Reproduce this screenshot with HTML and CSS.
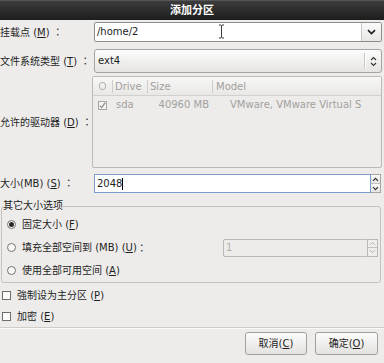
FILE: index.html
```html
<!DOCTYPE html>
<html>
<head>
<meta charset="utf-8">
<title>添加分区</title>
<link rel="stylesheet" href="styles.css">
</head>
<body>
	<div class="titlebar">添加分区</div>

	<div class="row r-mount">
		<label class="lbl">挂载点 (<u>M</u>) <span class="colon">：</span></label>
		<div class="combo_entry">
			<span class="entry_text">/home/2</span>
			<svg class="ibeam" width="7" height="15" viewBox="0 0 7 15"><path d="M1 1h2l0.5 0.6 0.5-0.6h2M3.5 1.5v12M1 14h2l0.5-0.6 0.5 0.6h2" fill="none" stroke="#3a3a3a" stroke-width="1"/></svg>
			<span class="drop_btn">
				<svg width="9" height="6" viewBox="0 0 9 6"><path d="M1 1.2l3.5 3.3 3.5-3.3" fill="none" stroke="#222" stroke-width="1.7"/></svg>
			</span>
		</div>
	</div>

	<div class="row r-fs">
		<label class="lbl">文件系统类型 (<u>T</u>) <span class="colon">：</span></label>
		<div class="combo">
			<span class="combo_text">ext4</span>
			<span class="combo_sep"></span>
			<svg class="updown" width="7" height="11" viewBox="0 0 7 11"><path d="M1 4l2.5-2.5 2.5 2.5M1 7l2.5 2.5 2.5-2.5" fill="none" stroke="#333" stroke-width="1.1"/></svg>
		</div>
	</div>

	<div class="row r-drives">
		<label class="lbl">允许的驱动器 (<u>D</u>) <span class="colon">：</span></label>
		<div class="drive_list">
			<div class="tv_head">
				<span class="c1"><span class="hbox"></span></span>
				<span class="c2">Drive</span>
				<span class="c3">Size</span>
				<span class="c4">Model</span>
			</div>
			<div class="tv_row">
				<span class="c1"><span class="cbox">
					<svg width="7" height="7" viewBox="0 0 7 7"><path d="M0.8 3.6l1.9 2 3.5-5" fill="none" stroke="#8d8b88" stroke-width="1.3"/></svg>
				</span></span>
				<span class="c2">sda</span>
				<span class="c3">40960 MB</span>
				<span class="c4">VMware, VMware Virtual S</span>
			</div>
		</div>
	</div>

	<div class="row r-size">
		<label class="lbl">大小(MB) (<u>S</u>) <span class="colon">：</span></label>
		<div class="spin">
			<span class="spin_entry focus">2048<span class="caret"></span></span>
			<span class="spin_btns">
				<span class="sb"><svg width="7" height="5" viewBox="0 0 7 5"><path d="M1 3.8l2.5-2.5 2.5 2.5" fill="none" stroke="#333" stroke-width="1.2"/></svg></span>
				<span class="sb"><svg width="7" height="5" viewBox="0 0 7 5"><path d="M1 1.2l2.5 2.5 2.5-2.5" fill="none" stroke="#333" stroke-width="1.2"/></svg></span>
			</span>
		</div>
	</div>

	<fieldset class="frame">
		<legend>其它大小选项</legend>
		<div class="opt"><span class="radio on"></span>固定大小 (<u>F</u>)</div>
		<div class="opt">
			<span class="radio"></span>填充全部空间到 (MB) (<u>U</u>) <span class="colon">：</span>
			<div class="spin spin_off">
				<span class="spin_entry">1</span>
				<span class="spin_btns">
					<span class="sb"><svg width="7" height="5" viewBox="0 0 7 5"><path d="M1 3.8l2.5-2.5 2.5 2.5" fill="none" stroke="#b2b0ad" stroke-width="1"/></svg></span>
					<span class="sb"><svg width="7" height="5" viewBox="0 0 7 5"><path d="M1 1.2l2.5 2.5 2.5-2.5" fill="none" stroke="#b2b0ad" stroke-width="1"/></svg></span>
				</span>
			</div>
		</div>
		<div class="opt"><span class="radio"></span>使用全部可用空间 (<u>A</u>)</div>
	</fieldset>

	<div class="checks">
		<div class="chk"><span class="box"></span>強制设为主分区 (<u>P</u>)</div>
		<div class="chk"><span class="box"></span>加密 (<u>E</u>)</div>
	</div>

	<div class="sep"></div>

	<div class="buttons">
		<button class="btn b_cancel">取消(<u>C</u>)</button>
		<button class="btn b_ok">确定(<u>O</u>)</button>
	</div>
</body>
</html>
```

FILE: styles.css
```css
*{ box-sizing: border-box; }

body{
	margin: 0;
	width: 384px;
	height: 363px;
	overflow: hidden;
	background: #edeceb;
	color: #1e1e1e;
	font: 10px/12px "DejaVu Sans", "Noto Sans CJK SC", sans-serif;
}

u{ text-decoration: underline; text-underline-offset: 1px; }
.colon{ font-family: "Noto Sans CJK TC", sans-serif; }

.titlebar{
	height: 20px;
	line-height: 20px;
	text-align: center;
	color: #fff;
	font-size: 11px;
	font-weight: bold;
	background: linear-gradient(#3c3c3c, #1d1d1d);
	border-top: 1px solid #555;
}

/* form rows: label column + field column */
.row{ display: grid; grid-template-columns: 94px 288px; align-items: center; }
.r-mount{ margin-top: 2px; height: 20px; }
.r-fs{ margin-top: 7px; height: 24px; }
.r-drives{ margin-top: 3px; height: 92px; }
.r-size{ margin-top: 6px; height: 19px; }
.lbl{ white-space: nowrap; }

.combo_entry{
	position: relative;
	height: 20px;
	display: flex;
	background: #fff;
	border: 1px solid #8f8c88;
	border-radius: 2px;
}
.entry_text{ flex: 1; padding-left: 2px; line-height: 18px; }
.ibeam{ position: absolute; left: 123px; top: 1px; }
.drop_btn{
	width: 20px;
	display: flex; align-items: center; justify-content: center;
	border-left: 1px solid #c9c7c4;
	background: linear-gradient(#fbfbfb, #e8e7e5);
}

.combo{
	height: 24px;
	display: flex; align-items: center;
	border: 1px solid #a6a3a0;
	border-radius: 3px;
	background: linear-gradient(#fcfcfc, #e5e4e2);
}
.combo_text{ flex: 1; padding-left: 3px; }
.combo_sep{ width: 2px; height: 16px; border-left: 1px solid #c7c5c2; border-right: 1px solid #fff; margin-right: 4px; }
.updown{ margin-right: 4px; }

.drive_list{
	margin-left: -2px;
	width: 290px;
	height: 92px;
	border: 1px solid #bdbab6;
	border-radius: 2px;
	color: #a2a09d;
}
.tv_head, .tv_row{ display: grid; grid-template-columns: 19px 35px 65px 1fr; align-items: center; }
.tv_head{ height: 19px; background: linear-gradient(#f7f7f6, #e9e8e6); border-bottom: 1px solid #d2d0cd; }
.tv_head .c2, .tv_head .c3, .tv_head .c4{ border-left: 1px solid #cfcdca; height: 13px; line-height: 13px; padding-left: 2px; }
.tv_head .c4{ padding-left: 3px; }
.tv_row{ height: 18px; }
.tv_row .c2{ padding-left: 4px; }
.tv_row .c3{ text-align: right; padding-right: 3px; }
.tv_row .c4{ padding-left: 18px; white-space: nowrap; }
.hbox{ display: block; margin-left: 6px; width: 7px; height: 8px; border: 1px solid #b3b1ae; border-radius: 3px; }
.cbox{ display: flex; align-items: center; justify-content: center; margin-left: 5px; width: 9px; height: 9px; border: 1px solid #a9a7a4; background: #f4f4f3; }

.spin{ height: 19px; display: flex; width: 287px; }
.spin_entry{
	flex: 1;
	display: flex; align-items: center;
	padding-left: 2px;
	background: #fff;
	border: 1px solid #8f8c88;
}
.spin_entry.focus{ border-color: #7a9ccc; }
.caret{ width: 1px; height: 12px; background: #000; }
.spin_btns{ width: 10px; display: flex; flex-direction: column; border: 1px solid #a8a5a1; border-left: none; }
.sb{ flex: 1; display: flex; align-items: center; justify-content: center; background: linear-gradient(#fafafa, #e6e5e3); }
.sb + .sb{ border-top: 1px solid #c4c2bf; }

.frame{
	margin: 7px 3px 0 1px;
	padding: 1px 2px 0 1px;
	border: 1px solid #c5c2be;
	border-radius: 3px;
}
.frame legend{ padding: 0; line-height: 12px; }
.opt{ height: 23px; display: flex; align-items: center; white-space: nowrap; }
.radio{
	width: 9px; height: 9px;
	margin: 0 6px 0 4px;
	border: 1px solid #75726f;
	border-radius: 50%;
	background: #fafafa;
	display: flex; align-items: center; justify-content: center;
}
.radio.on::after{ content: ""; width: 5px; height: 5px; border-radius: 50%; background: #2a2a2a; }

.spin_off{ margin-left: auto; width: 155px; height: 18px; color: #b0aeab; }
.spin_off .spin_entry{ background: #edeceb; border-color: #bcb9b5; border-radius: 2px 0 0 2px; }
.spin_off .spin_btns{ border-color: #bcb9b5; }
.spin_off .sb{ background: #efeeed; }

.checks{ margin-top: 2px; }
.chk{ height: 21px; display: flex; align-items: center; }
.box{ width: 9px; height: 9px; margin: 0 6px 0 2px; border: 1px solid #6f6c69; background: #fbfbfb; }

.sep{ margin-top: 0; height: 2px; border-top: 1px solid #d0cdc9; border-bottom: 1px solid #f9f9f9; }

.buttons{ display: flex; justify-content: flex-end; gap: 8px; padding: 3px 6px 0 0; }
.btn{
	height: 23px;
	font: inherit;
	color: #1e1e1e;
	border: 1px solid #a3a09c;
	border-radius: 3px;
	background: linear-gradient(#fcfcfc, #e4e2e0);
	padding: 0;
}
.b_cancel{ width: 62px; }
.b_ok{ width: 63px; }
```
